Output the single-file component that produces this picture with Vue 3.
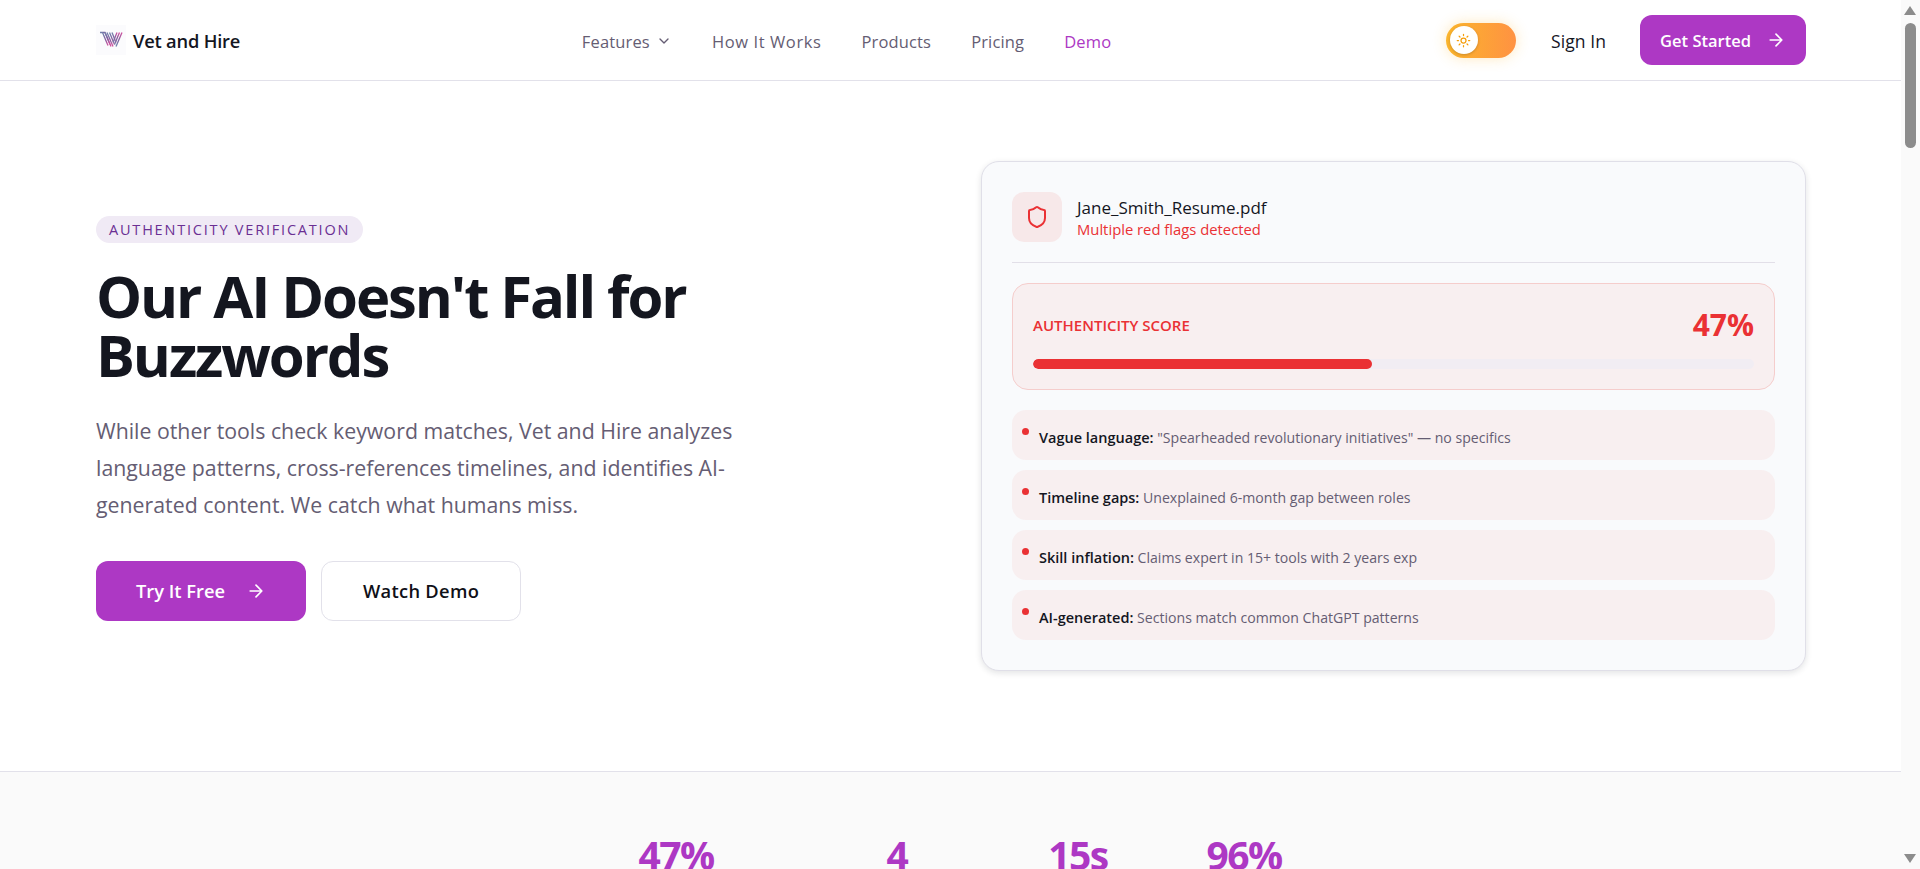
<template>
  <div class="screen">
    <div class="page">
      <header class="nav">
        <a class="brand">
          <span class="brand-mark">
            <svg viewBox="0 0 30 30" width="30" height="30">
              <defs>
                <linearGradient id="logoGrad" x1="0" y1="0" x2="1" y2="0">
                  <stop offset="0" stop-color="#6f86ad" />
                  <stop offset="0.5" stop-color="#7d5f9e" />
                  <stop offset="1" stop-color="#d8509f" />
                </linearGradient>
              </defs>
              <g fill="none" stroke="url(#logoGrad)" stroke-width="1.3">
                <path d="M4 7.5h5l6 14" />
                <path d="M6.5 7.5l5.5 13" />
                <path d="M9 7.5l5 12" />
                <path d="M11 7.5l6 14" />
                <path d="M13.5 7.5l5 12" />
                <path d="M16 7.5l4 10" />
                <path d="M26 7.5l-6 14" />
                <path d="M23.5 7.5l-5 12" />
                <path d="M21 7.5l-4 10" />
              </g>
            </svg>
          </span>
          <span class="brand-name">Vet and Hire</span>
        </a>
        <nav class="links">
          <a class="link">
            Features
            <svg class="chev" viewBox="0 0 24 24" width="16" height="16"><path d="m6 9 6 6 6-6" /></svg>
          </a>
          <a class="link wide">How It Works</a>
          <a class="link">Products</a>
          <a class="link">Pricing</a>
          <a class="link active">Demo</a>
        </nav>
        <div class="actions">
          <div class="toggle">
            <span class="knob">
              <svg viewBox="0 0 24 24" width="15" height="15">
                <circle cx="12" cy="12" r="4" />
                <path d="M12 2v2M12 20v2M4.93 4.93l1.41 1.41M17.66 17.66l1.41 1.41M2 12h2M20 12h2M6.34 17.66l-1.41 1.41M19.07 4.93l-1.41 1.41" />
              </svg>
            </span>
          </div>
          <a class="signin">Sign In</a>
          <a class="btn-nav">
            Get Started
            <svg class="arrow" viewBox="0 0 24 24" width="20" height="20"><path d="M5 12h14M12 5l7 7-7 7" /></svg>
          </a>
        </div>
      </header>

      <section class="hero">
        <div class="copy">
          <span class="badge">AUTHENTICITY VERIFICATION</span>
          <h1>Our AI Doesn't Fall for Buzzwords</h1>
          <p class="lead">While other tools check keyword matches, Vet and Hire analyzes language patterns, cross-references timelines, and identifies AI-generated content. We catch what humans miss.</p>
          <div class="cta">
            <a class="btn-main">
              Try It Free
              <svg class="arrow" viewBox="0 0 24 24" width="20" height="20"><path d="M5 12h14M12 5l7 7-7 7" /></svg>
            </a>
            <a class="btn-ghost">Watch Demo</a>
          </div>
        </div>

        <div class="card">
          <div class="file">
            <span class="file-icon">
              <svg viewBox="0 0 24 24" width="24" height="24"><path d="M20 13c0 5-3.5 7.5-7.66 8.95a1 1 0 0 1-.67-.01C7.5 20.5 4 18 4 13V6a1 1 0 0 1 1-1c2 0 4.5-1.2 6.24-2.72a1.17 1.17 0 0 1 1.52 0C14.51 3.81 17 5 19 5a1 1 0 0 1 1 1z" /></svg>
            </span>
            <div>
              <div class="file-name">Jane_Smith_Resume.pdf</div>
              <div class="file-note">Multiple red flags detected</div>
            </div>
          </div>

          <div class="score">
            <div class="score-top">
              <span class="score-label">AUTHENTICITY SCORE</span>
              <span class="score-value">47%</span>
            </div>
            <div class="track"><div class="fill" :style="{ width: score + '%' }"></div></div>
          </div>

          <ul class="flags">
            <li v-for="flag in flags" :key="flag.title" class="flag">
              <span class="dot"></span>
              <span class="flag-text"><strong>{{ flag.title }}:</strong> {{ flag.text }}</span>
            </li>
          </ul>
        </div>
      </section>

      <section class="stats">
        <div v-for="stat in stats" :key="stat.value" class="stat" :style="{ width: stat.width + 'px' }">{{ stat.value }}</div>
      </section>
    </div>

    <aside class="scrollbar">
      <span class="sb-up"></span>
      <span class="sb-thumb"></span>
      <span class="sb-down"></span>
    </aside>
  </div>
</template>

<script setup>
const score = 47

const flags = [
  { title: 'Vague language', text: '"Spearheaded revolutionary initiatives" — no specifics' },
  { title: 'Timeline gaps', text: 'Unexplained 6-month gap between roles' },
  { title: 'Skill inflation', text: 'Claims expert in 15+ tools with 2 years exp' },
  { title: 'AI-generated', text: 'Sections match common ChatGPT patterns' },
]

const stats = [
  { value: '47%', width: 161 },
  { value: '4', width: 153 },
  { value: '15s', width: 81 },
  { value: '96%', width: 123 },
]
</script>

<style>
html, body {
  margin: 0;
  overflow: hidden;
}
</style>

<style scoped>
.screen {
  display: flex;
  height: 869px;
  overflow: hidden;
  background: #fff;
  font-family: "Open Sans", "Noto Sans", sans-serif;
  color: #14161f;
}

.page {
  flex: 1;
  min-width: 0;
  overflow: hidden;
}

/* top bar */
.nav {
  display: flex;
  align-items: center;
  justify-content: space-between;
  height: 80px;
  padding: 0 95px 0 96px;
  border-bottom: 1px solid #e2e1ea;
}

.brand {
  display: flex;
  align-items: center;
  gap: 7px;
}

.brand-mark {
  display: flex;
  width: 30px;
  height: 30px;
  background: #fbfbfd;
}

.brand-name {
  font-size: 18.3px;
  font-weight: 600;
  letter-spacing: -0.2px;
}

.links {
  display: flex;
  align-items: center;
  gap: 40px;
  margin-left: 7px;
  padding-top: 2px;
}

.link {
  display: flex;
  align-items: center;
  gap: 6px;
  font-size: 16.5px;
  font-weight: 500;
  letter-spacing: 0.15px;
  color: #655d73;
}

.link.wide {
  letter-spacing: 0.6px;
}

.link.active {
  color: #ad38c4;
}

.chev {
  fill: none;
  stroke: currentColor;
  stroke-width: 2;
  stroke-linecap: round;
  stroke-linejoin: round;
}

.actions {
  display: flex;
  align-items: center;
  justify-content: flex-end;
}

.toggle {
  display: flex;
  align-items: center;
  width: 70px;
  height: 35px;
  padding: 0 4px;
  box-sizing: border-box;
  border-radius: 18px;
  background: linear-gradient(90deg, #fbb52c, #ff9242);
  box-shadow: 0 0 14px rgba(251, 181, 44, 0.3);
}

.knob {
  display: flex;
  align-items: center;
  justify-content: center;
  width: 28px;
  height: 28px;
  border-radius: 50%;
  background: #fff;
  box-shadow: 0 1px 3px rgba(0, 0, 0, 0.2);
}

.knob svg {
  fill: none;
  stroke: #f59e0b;
  stroke-width: 2;
  stroke-linecap: round;
}

.signin {
  margin-left: 35px;
  font-size: 17.5px;
  font-weight: 500;
  letter-spacing: 0.1px;
  padding-top: 2px;
}

.btn-nav {
  display: flex;
  align-items: center;
  gap: 15px;
  height: 50px;
  margin-left: 34px;
  padding: 0 20px;
  border-radius: 12px;
  background: #ad38c4;
  color: #fff;
  font-size: 16.5px;
  font-weight: 600;
}

.arrow {
  fill: none;
  stroke: currentColor;
  stroke-width: 2;
  stroke-linecap: round;
  stroke-linejoin: round;
}

/* hero */
.hero {
  display: grid;
  grid-template-columns: 1fr 825px;
  align-items: center;
  padding: 80px 95px 100px 96px;
}

.copy {
  max-width: 660px;
  padding-top: 4px;
}

.badge {
  display: inline-block;
  padding: 4px 13px;
  border-radius: 14px;
  background: #f0eaf5;
  color: #6b2f93;
  font-size: 14.5px;
  font-weight: 500;
  letter-spacing: 1.8px;
}

h1 {
  margin: 23px 0 28px;
  font-size: 58px;
  line-height: 59px;
  font-weight: 700;
  letter-spacing: -2.1px;
  color: #14161f;
}

.lead {
  margin: 0 0 38px;
  max-width: 660px;
  font-size: 21.3px;
  line-height: 37px;
  color: #655d73;
}

.cta {
  display: flex;
  gap: 15px;
}

.btn-main {
  display: flex;
  align-items: center;
  gap: 21px;
  height: 60px;
  padding: 0 40px;
  border-radius: 12px;
  background: #ad38c4;
  color: #fff;
  font-size: 18.3px;
  font-weight: 600;
}

.btn-ghost {
  display: flex;
  align-items: center;
  height: 60px;
  padding: 0 41px;
  box-sizing: border-box;
  border: 1px solid #e2e1ea;
  border-radius: 12px;
  color: #0f1017;
  font-size: 18.3px;
  font-weight: 600;
  letter-spacing: 0.3px;
}

/* resume card */
.card {
  padding: 30px;
  border: 1px solid #e0dfe8;
  border-radius: 18px;
  background: #f9fafc;
  box-shadow: 0 2px 6px rgba(20, 22, 31, 0.12);
}

.file {
  display: flex;
  align-items: center;
  gap: 15px;
  padding-bottom: 20px;
  border-bottom: 1px solid #e2dfe8;
}

.file-icon {
  display: flex;
  align-items: center;
  justify-content: center;
  width: 50px;
  height: 50px;
  border-radius: 12px;
  background: #f7e8e9;
}

.file-icon svg {
  fill: none;
  stroke: #ea3134;
  stroke-width: 2;
  stroke-linecap: round;
  stroke-linejoin: round;
}

.file-name {
  font-size: 17px;
  line-height: 23px;
  font-weight: 500;
}

.file-note {
  font-size: 14.8px;
  line-height: 20px;
  color: #ea3134;
}

.score {
  margin-top: 20px;
  padding: 20px;
  border: 1px solid #f5cdcc;
  border-radius: 16px;
  background: #f8eff0;
}

.score-top {
  display: flex;
  align-items: center;
  justify-content: space-between;
  margin-bottom: 13px;
}

.score-label {
  font-size: 15px;
  font-weight: 600;
  color: #ea3134;
}

.score-value {
  font-size: 30px;
  line-height: 42px;
  font-weight: 700;
  color: #ea3134;
}

.track {
  height: 10px;
  border-radius: 5px;
  background: #f1edf3;
  overflow: hidden;
}

.fill {
  height: 100%;
  border-radius: 5px;
  background: #ea3134;
}

.flags {
  display: flex;
  flex-direction: column;
  gap: 10px;
  margin: 20px 0 0;
  padding: 0;
  list-style: none;
}

.flag {
  display: flex;
  gap: 10px;
  height: 50px;
  padding: 0 10px;
  box-sizing: border-box;
  border-radius: 14px;
  background: #f8eff0;
}

.dot {
  flex: none;
  width: 7px;
  height: 7px;
  margin-top: 18px;
  border-radius: 50%;
  background: #ea3134;
}

.flag-text {
  padding-top: 18px;
  font-size: 14.1px;
  line-height: 20px;
  color: #655d73;
}

.flag-text strong {
  font-size: 14.5px;
  font-weight: 600;
  color: #14161f;
}

/* stats band */
.stats {
  display: flex;
  justify-content: center;
  gap: 64px;
  padding-top: 59px;
  border-top: 1px solid #e2e1ea;
  background: #fafafa;
  height: 300px;
}

.stat {
  text-align: center;
  font-size: 39px;
  line-height: 48px;
  font-weight: 700;
  letter-spacing: -1.5px;
  color: #ad38c4;
}

/* fake window scrollbar, the shot shows one */
.scrollbar {
  position: relative;
  flex: none;
  width: 19px;
  background: #fafafa;
}

.sb-thumb {
  position: absolute;
  left: 4px;
  top: 23px;
  width: 11px;
  height: 125px;
  border-radius: 6px;
  background: #8c8c8c;
}

.sb-up,
.sb-down {
  position: absolute;
  left: 3px;
  width: 0;
  height: 0;
  border-left: 6.5px solid transparent;
  border-right: 6.5px solid transparent;
}

.sb-up {
  top: 6px;
  border-bottom: 9px solid #8c8c8c;
}

.sb-down {
  bottom: 6px;
  border-top: 9px solid #8c8c8c;
}
</style>
